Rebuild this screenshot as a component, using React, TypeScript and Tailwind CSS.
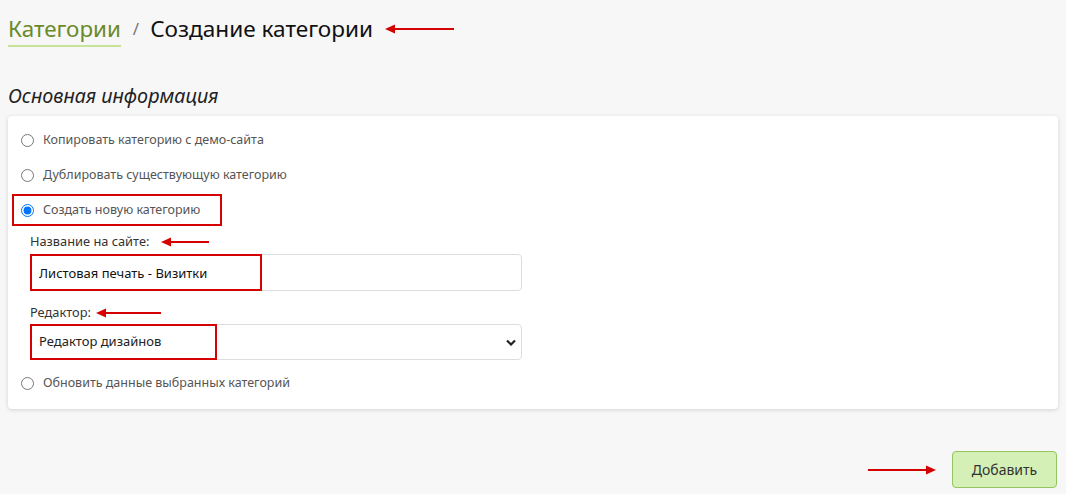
import React, { useState } from "react";

function Arrow({ width, dir = "left" }: { width: number; dir?: "left" | "right" }) {
  const w = width;
  return (
    <svg width={w} height={10} viewBox={`0 0 ${w} 10`} className="shrink-0">
      {dir === "left" ? (
        <>
          <line x1={8} y1={5} x2={w} y2={5} stroke="#d50000" strokeWidth={2} />
          <polygon points="0,5 10,0.5 10,9.5" fill="#d50000" />
        </>
      ) : (
        <>
          <line x1={0} y1={5} x2={w - 8} y2={5} stroke="#d50000" strokeWidth={2} />
          <polygon points={`${w},5 ${w - 10},0.5 ${w - 10},9.5`} fill="#d50000" />
        </>
      )}
    </svg>
  );
}

const options = [
  { id: "copy", label: "Копировать категорию с демо-сайта" },
  { id: "dup", label: "Дублировать существующую категорию" },
  { id: "new", label: "Создать новую категорию" },
];

export default function App() {
  const [mode, setMode] = useState("new");
  const [name, setName] = useState("Листовая печать - Визитки");

  return (
    <div className="min-h-screen bg-[#f7f7f7] px-2 font-['Noto_Sans',sans-serif] text-[#333]">
      {/* breadcrumb */}
      <div className="flex items-center pt-[14px] h-[44px]">
        <a href="#" className="text-[22.4px] leading-[30px] text-[#6a8a2a] border-b-2 border-[#c7e39a] pb-[1px] -mb-[3px]">Категории</a>
        <span className="ml-[12px] mr-[11px] text-[17px] text-[#777]">/</span>
        <h1 className="text-[22.6px] leading-[30px] text-[#111]">Создание категории</h1>
        <span className="ml-3"><Arrow width={69} /></span>
      </div>

      <h2 className="mt-[39px] text-[19.8px] leading-[26px] italic text-[#222]">Основная информация</h2>

      <div className="mt-[7px] bg-white rounded-[4px] shadow-[0_1px_4px_rgba(0,0,0,0.15)] pt-[7px] pb-[8px]">
        {options.map((o) => (
          <label key={o.id} className="relative flex items-center h-[35px] pl-[13px] text-[12.5px] text-[#555] cursor-pointer">
            <input
              type="radio"
              name="mode"
              checked={mode === o.id}
              onChange={() => setMode(o.id)}
              className="m-0 w-[13px] h-[13px] accent-[#0075ff]"
            />
            <span className="ml-[9px]">{o.label}</span>
            {o.id === "new" && (
              <span className="absolute left-[4px] top-[1px] w-[210px] h-[32px] border-2 border-[#d50000] pointer-events-none" />
            )}
          </label>
        ))}

        <div className="pl-[22px]">
          <div className="flex items-center h-[20px] mt-[4px] text-[12.8px] text-[#333]">
            Название на сайте:
            <span className="ml-3"><Arrow width={48} /></span>
          </div>
          <div className="relative mt-[2px] w-[492px]">
            <input
              value={name}
              onChange={(e) => setName(e.target.value)}
              className="w-full h-[37px] border border-[#ddd] rounded-[4px] px-2 text-[13px] text-[#111] outline-none"
            />
            <span className="absolute left-0 top-0 w-[232px] h-[37px] border-2 border-[#d50000] pointer-events-none" />
          </div>

          <div className="flex items-center h-[20px] mt-[12px] text-[12.8px] text-[#333]">
            Редактор:
            <span className="ml-[5px]"><Arrow width={65} /></span>
          </div>
          <div className="relative mt-[1px] w-[492px]">
            <select className="w-full h-[36px] appearance-none border border-[#ddd] rounded-[4px] px-2 text-[13px] text-[#222] bg-white outline-none">
              <option>Редактор дизайнов</option>
              <option>Без редактора</option>
            </select>
            <svg width="10" height="7" viewBox="0 0 10 7" className="absolute right-[6px] top-[15px] pointer-events-none">
              <path d="M1 1.5 L5 5.5 L9 1.5" stroke="#222" strokeWidth="2.2" fill="none" />
            </svg>
            <span className="absolute left-0 top-0 w-[187px] h-[36px] border-2 border-[#d50000] pointer-events-none" />
          </div>
        </div>

        <label className="flex items-center h-[35px] mt-[6px] pl-[13px] text-[12.5px] text-[#555] cursor-pointer">
          <input
            type="radio"
            name="mode"
            checked={mode === "update"}
            onChange={() => setMode("update")}
            className="m-0 w-[13px] h-[13px] accent-[#0075ff]"
          />
          <span className="ml-[9px]">Обновить данные выбранных категорий</span>
        </label>
      </div>

      <div className="flex items-center justify-end mt-[42px] pr-[1px]">
        <Arrow width={68} dir="right" />
        <button className="ml-[16px] w-[105px] h-[37px] rounded-[4px] bg-[#d4f0b6] border border-[#94c55e] text-[14px] text-[#333]">
          Добавить
        </button>
      </div>
    </div>
  );
}
